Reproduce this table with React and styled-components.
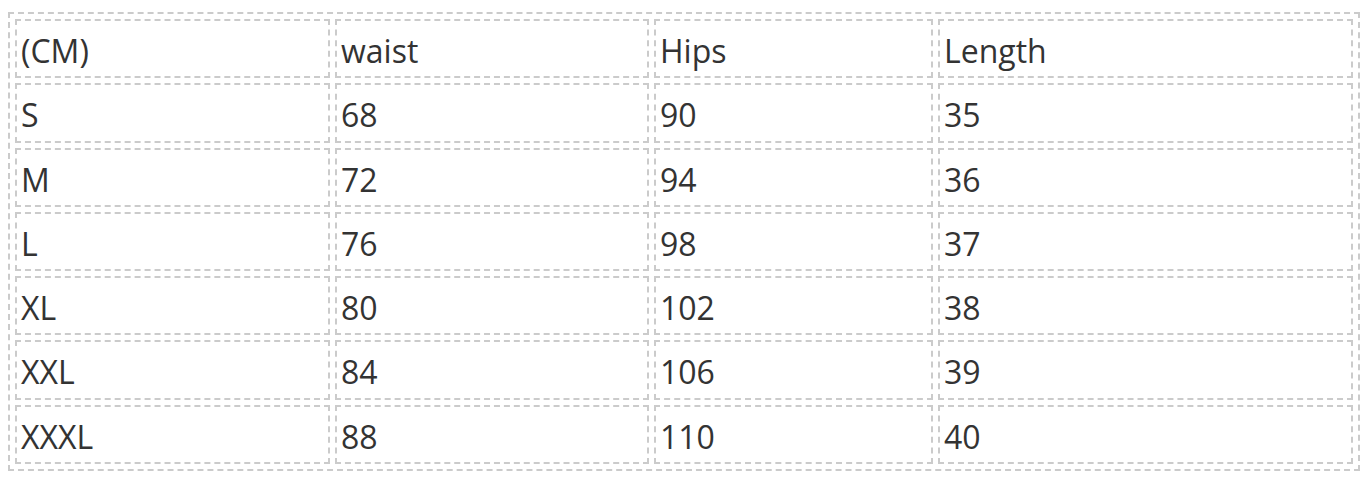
import React from "react";
import styled, { createGlobalStyle } from "styled-components";

const Global = createGlobalStyle`
  html, body { margin: 0; padding: 0; background: #fff; }
  body { padding: 12px 8px 0 8px; font-family: "Open Sans", "Noto Sans", sans-serif; }
`;

const Table = styled.table`
  width: 100%;
  border: 2px dashed #cbcbcb;
  border-collapse: separate;
  border-spacing: 5px;
  table-layout: fixed;
  color: #333;
  font-size: 32px;
`;

const Cell = styled.td`
  border: 2px dashed #cbcbcb;
  padding: 8px 4px 4.3px 4px;
  line-height: 43px;
  text-align: left;
  vertical-align: middle;
  white-space: nowrap;
  font-weight: 400;
`;

const rows = [
  ["(CM)", "waist", "Hips", "Length"],
  ["S", "68", "90", "35"],
  ["M", "72", "94", "36"],
  ["L", "76", "98", "37"],
  ["XL", "80", "102", "38"],
  ["XXL", "84", "106", "39"],
  ["XXXL", "88", "110", "40"],
];

const widths = ["315px", "314px", "279px", undefined];

export default function App() {
  return (
    <>
      <Global />
      <Table>
        <colgroup>
          {widths.map((w, i) => (
            <col key={i} style={w ? { width: w } : undefined} />
          ))}
        </colgroup>
        <tbody>
          {rows.map((r, i) => (
            <tr key={i}>
              {r.map((c, j) => (
                <Cell key={j}>{c}</Cell>
              ))}
            </tr>
          ))}
        </tbody>
      </Table>
    </>
  );
}
